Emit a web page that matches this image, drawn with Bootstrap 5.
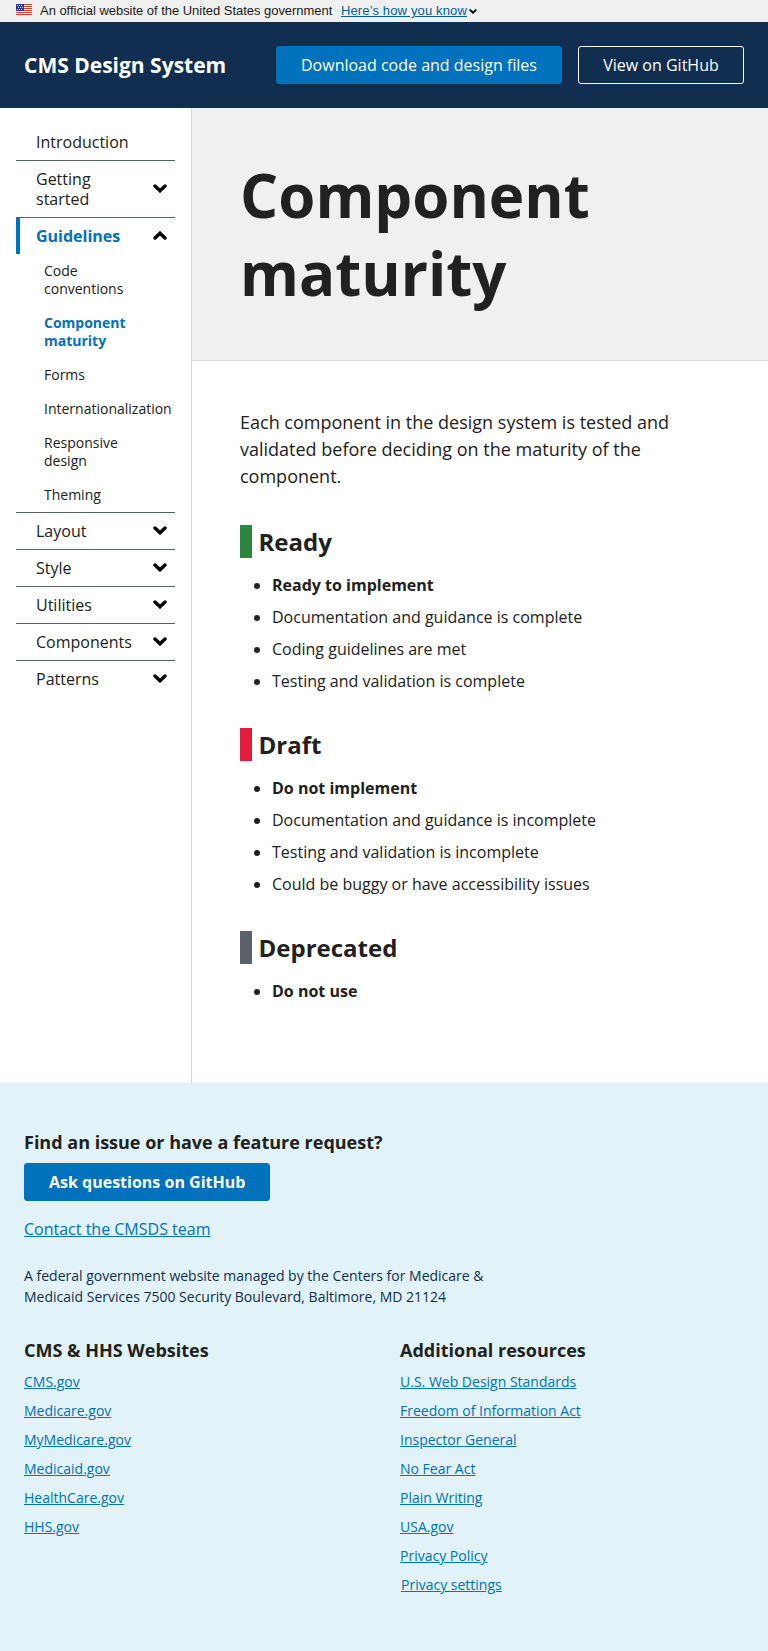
<!DOCTYPE html>
<html lang="en">
<head>
<meta charset="utf-8">
<meta name="viewport" content="width=device-width, initial-scale=1">
<title>Component maturity - CMS Design System</title>
<link href="https://cdn.jsdelivr.net/npm/bootstrap@5.3.0/dist/css/bootstrap.min.css" rel="stylesheet">
<style>
  body { font-family: "Open Sans", sans-serif; font-size: 16px; line-height: 24px; color: #212121; }
  a { color: #0071bc; }
  .gov-banner { height: 22px; background: #f0f0f0; padding: 0 16px; font: 13px/21px "Liberation Sans", sans-serif; letter-spacing: -.03px; color: #1b1b1b; }
  .gov-banner a { color: #005ea2; letter-spacing: .14px; margin-left: 8.6px; }
  .site-header { height: 86px; background: #112e51; padding: 0 24px; }
  .site-title { font-size: 21px; font-weight: 700; color: #fff; }
  .btn-ds { --bs-btn-padding-x: 24px; --bs-btn-padding-y: 0; --bs-btn-border-radius: 3px; --bs-btn-font-size: 16px; --bs-btn-line-height: 36px; --bs-btn-color: #fff; --bs-btn-hover-color: #fff; --bs-btn-border-color: #fff; --bs-btn-hover-border-color: #fff; }
  .btn-solid { --bs-btn-bg: #0071bc; --bs-btn-border-color: #0071bc; --bs-btn-hover-bg: #205493; --bs-btn-hover-border-color: #205493; }
  .btn-download { width: 286px; }
  .btn-view { width: 166px; }
  .side { width: 192px; border-right: 1px solid #d6d7d9; padding: 16px 16px 0; }
  .side .nav-item + .nav-item { border-top: 1px solid #5b616b; }
  .side .nav-link { display: flex; align-items: center; justify-content: space-between; padding: 8px 8px 8px 16px; border-left: 4px solid transparent; line-height: 20px; color: #212121; }
  .side .nav-link.active { border-left-color: #0071bc; color: #0071bc; font-weight: 700; }
  .subnav a { display: block; padding: 8px 0 8px 28px; font-size: 14px; line-height: 18px; color: #212121; text-decoration: none; }
  .subnav a.active { color: #0071bc; font-weight: 700; }
  .chev { width: 14px; height: 9px; fill: none; stroke: #000; stroke-width: 3.4; stroke-linecap: round; stroke-linejoin: miter; }
  .side .chev { margin-bottom: 1px; }
  .page-head { background: #f0f0f0; border-bottom: 1px solid #d6d7d9; padding: 48px; }
  .page-head h1 { font-size: 60px; line-height: 78px; font-weight: 700; }
  .page-body { padding: 48px 48px 72px; }
  .intro { font-size: 18px; line-height: 27px; margin-bottom: 35px; }
  .status { border-left: 12px solid; padding-left: 6.5px; font-size: 24px; line-height: 33px; font-weight: 700; margin-bottom: 15px; }
  .status span { color: #212121; }
  .status-ready { border-color: #2e8540; }
  .status-draft { border-color: #e31c3d; }
  .status-deprecated { border-color: #5b616b; }
  .page-body ul { margin-bottom: 35px; }
  .page-body ul:last-child { margin-bottom: 0; }
  .page-body li { margin-bottom: 8px; }
  .site-footer { background: #e1f3f8; padding: 47px 24px 0; height: 568px; }
  .site-footer h2 { font-size: 18px; line-height: 24px; font-weight: 700; margin-bottom: 9px; }
  .agency { width: 480px; font-size: 14px; line-height: 21px; color: #112e51; margin-bottom: 31px; }
  .site-footer .row { --bs-gutter-x: 32px; }
  .link-list { font-size: 14px; line-height: 21px; }
</style>
</head>
<body>
<svg class="d-none">
  <symbol id="down" viewBox="0 0 14 9"><path d="M2 2l5 4.8L12 2"/></symbol>
  <symbol id="up" viewBox="0 0 14 9"><path d="M2 7l5-4.8L12 7"/></symbol>
</svg>

<div class="gov-banner d-flex">
  <svg class="me-2 mt-1 flex-shrink-0" width="16" height="11" viewBox="0 0 16 11">
    <path fill="#fff" d="M0 0h16v11H0z"/>
    <path fill="#db3e1f" d="M0 0h16v1H0zM0 2h16v1H0zM0 4h16v1H0zM0 6h16v1H0zM0 8h16v1H0zM0 10h16v1H0z"/>
    <path fill="#1e33b1" d="M0 0h8v7H0z"/>
    <path fill="#fff" d="M1 1h1v1H1zM3 1h1v1H3zM5 1h1v1H5zM2 3h1v1H2zM4 3h1v1H4zM6 3h1v1H6zM1 5h1v1H1zM3 5h1v1H3zM5 5h1v1H5z"/>
  </svg>
  <span>An official website of the United States government</span>
  <a href="#">Here’s how you know</a>
  <svg class="chev" style="width:8px;height:5px;margin:9px 0 0 2px"><use href="#down"/></svg>
</div>

<header class="site-header d-flex align-items-center">
  <div class="site-title me-auto">CMS Design System</div>
  <a class="btn btn-ds btn-solid btn-download px-0 me-3" href="#">Download code and design files</a>
  <a class="btn btn-ds btn-view px-0" href="#">View on GitHub</a>
</header>

<div class="d-flex">
  <nav class="side flex-shrink-0">
    <ul class="nav flex-column flex-nowrap">
      <li class="nav-item"><a class="nav-link" href="#">Introduction</a></li>
      <li class="nav-item"><a class="nav-link" href="#">Getting<br>started <svg class="chev"><use href="#down"/></svg></a></li>
      <li class="nav-item">
        <a class="nav-link active" href="#">Guidelines <svg class="chev"><use href="#up"/></svg></a>
        <div class="subnav">
          <a href="#">Code<br>conventions</a>
          <a href="#" class="active">Component<br>maturity</a>
          <a href="#">Forms</a>
          <a href="#">Internationalization</a>
          <a href="#">Responsive<br>design</a>
          <a href="#">Theming</a>
        </div>
      </li>
      <li class="nav-item"><a class="nav-link" href="#">Layout <svg class="chev"><use href="#down"/></svg></a></li>
      <li class="nav-item"><a class="nav-link" href="#">Style <svg class="chev"><use href="#down"/></svg></a></li>
      <li class="nav-item"><a class="nav-link" href="#">Utilities <svg class="chev"><use href="#down"/></svg></a></li>
      <li class="nav-item"><a class="nav-link" href="#">Components <svg class="chev"><use href="#down"/></svg></a></li>
      <li class="nav-item"><a class="nav-link" href="#">Patterns <svg class="chev"><use href="#down"/></svg></a></li>
    </ul>
  </nav>
  <main class="flex-grow-1">
    <div class="page-head"><h1 class="m-0">Component<br>maturity</h1></div>
    <div class="page-body">
      <p class="intro">Each component in the design system is tested and validated before deciding on the maturity of the component.</p>
      <h2 class="status status-ready"><span>Ready</span></h2>
      <ul>
        <li><strong>Ready to implement</strong></li>
        <li>Documentation and guidance is complete</li>
        <li>Coding guidelines are met</li>
        <li>Testing and validation is complete</li>
      </ul>
      <h2 class="status status-draft"><span>Draft</span></h2>
      <ul>
        <li><strong>Do not implement</strong></li>
        <li>Documentation and guidance is incomplete</li>
        <li>Testing and validation is incomplete</li>
        <li>Could be buggy or have accessibility issues</li>
      </ul>
      <h2 class="status status-deprecated"><span>Deprecated</span></h2>
      <ul>
        <li><strong>Do not use</strong></li>
      </ul>
    </div>
  </main>
</div>

<footer class="site-footer">
  <h2>Find an issue or have a feature request?</h2>
  <a class="btn btn-ds btn-solid fw-bold" href="#">Ask questions on GitHub</a>
  <p class="mt-3 mb-4"><a href="#">Contact the CMSDS team</a></p>
  <p class="agency">A federal government website managed by the Centers for Medicare &amp; Medicaid Services 7500 Security Boulevard, Baltimore, MD 21124</p>
  <div class="row">
    <div class="col-6">
      <h2>CMS &amp; HHS Websites</h2>
      <ul class="link-list list-unstyled vstack gap-2">
        <li><a href="#">CMS.gov</a></li>
        <li><a href="#">Medicare.gov</a></li>
        <li><a href="#">MyMedicare.gov</a></li>
        <li><a href="#">Medicaid.gov</a></li>
        <li><a href="#">HealthCare.gov</a></li>
        <li><a href="#">HHS.gov</a></li>
      </ul>
    </div>
    <div class="col-6">
      <h2>Additional resources</h2>
      <ul class="link-list list-unstyled vstack gap-2">
        <li><a href="#">U.S. Web Design Standards</a></li>
        <li><a href="#">Freedom of Information Act</a></li>
        <li><a href="#">Inspector General</a></li>
        <li><a href="#">No Fear Act</a></li>
        <li><a href="#">Plain Writing</a></li>
        <li><a href="#">USA.gov</a></li>
        <li><a href="#">Privacy Policy</a></li>
        <li style="padding-left:1px"><a href="#">Privacy settings</a></li>
      </ul>
    </div>
  </div>
</footer>
<script src="https://cdn.jsdelivr.net/npm/bootstrap@5.3.0/dist/js/bootstrap.bundle.min.js"></script>
</body>
</html>
